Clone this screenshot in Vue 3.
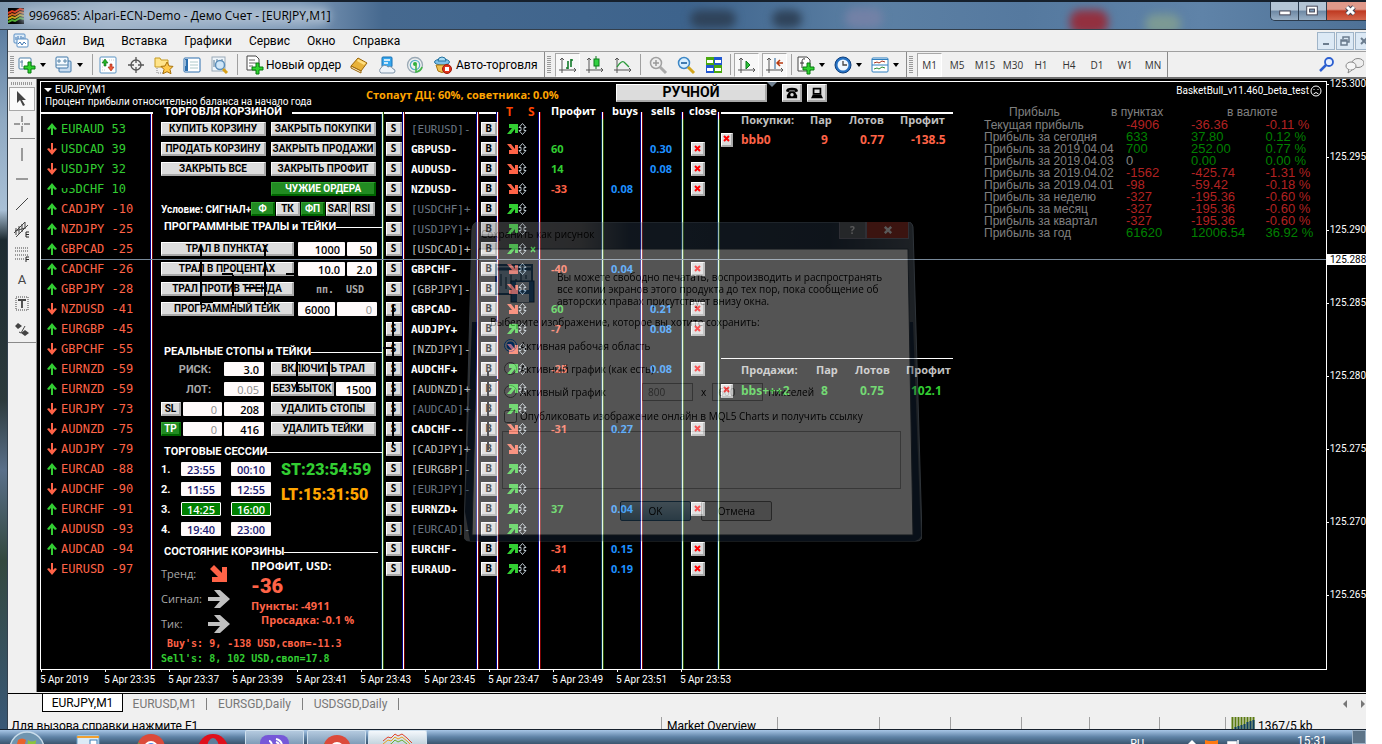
<script setup>
const icons = {
  app: '<rect width="16" height="16" fill="#000"/><g fill="none" stroke-width="2"><path d="M0 5l4-2 3 1 5-3 4 1" stroke="#e03a1e"/><path d="M0 8l4-2 3 1 5-3 4 1" stroke="#d8651c"/><path d="M0 11l4-2 3 1 5-3 4 1" stroke="#c8a818"/><path d="M0 14l4-2 3 1 5-3 4 1" stroke="#4fae2e"/></g>',
  charts: '<rect x="1" y="1" width="11" height="9" rx="1" fill="#dcebf8" stroke="#5a8fc4"/><path d="M3 7V4M5 6V3M8 7V3M10 6V4" stroke="#3c74b0"/><rect x="4" y="6" width="11" height="8" rx="1" fill="#fff" stroke="#5a8fc4"/><path d="M5 11l2-2 2 3 2-3 2 2" fill="none" stroke="#3c74b0"/>',
  plus: '<rect x="2" y="3" width="12" height="11" rx="1" fill="#fff" stroke="#4a7fa8"/><path d="M5 5v7M3 7h3" stroke="#5a86a8"/><path d="M11 7h3v4h4v3h-4v4h-3v-4H7v-3h4z" fill="#2fd42f" stroke="#087a10"/>',
  wins: '<rect x="5" y="6" width="12" height="11" rx="1" fill="#c8dcf0" stroke="#3f77a8"/><rect x="2" y="2" width="12" height="11" rx="1" fill="#f4faff" stroke="#3f77a8"/><path d="M2 10h12M5 4v4M3 6h4M11 4v4M9 6h4" stroke="#5a86a8"/>',
  market: '<rect x="2" y="2" width="16" height="16" rx="1" fill="#fff" stroke="#5a94c4"/><path d="M4 5h2M11 5h5M4 15h4M4 12h2" stroke="#c9ccd0" stroke-dasharray="1 1"/><path d="M7 4l3 4H8v3H6V8H4z" fill="#25b325" stroke="#0b6b10" stroke-width=".6"/><path d="M13 16l-3-4h2V9h2v3h2z" fill="#ee5a38" stroke="#9c2410" stroke-width=".6"/>',
  cross: '<circle cx="10" cy="10" r="5" fill="none" stroke="#555" stroke-width="1.3"/><path d="M10 2v6M10 12v6M2 10h6M12 10h6" stroke="#555" stroke-width="1.3"/>',
  star: '<path d="M1 3h5l1 2h7v7H1z" fill="#ffe48a" stroke="#c59a20"/><path d="M3 13v5h6" stroke="#888" fill="none" stroke-dasharray="1 1"/><path d="M13 7l2 4 4 .4-3 3 1 4.300-4-2-4 2 1-4.300-3-3 4-.4z" fill="#ffc94a" stroke="#a9720a"/>',
  nav: '<rect x="2" y="3" width="16" height="14" rx="1" fill="#fff" stroke="#2d6fae"/><path d="M3 4h3v12H3z" fill="#2d6fae"/><path d="M8 7h8M8 10h8M8 13h8" stroke="#9bb" stroke-width=".8"/><path d="M3 6h1M3 8h1M3 10h1" stroke="#fff"/>',
  tester: '<rect x="2" y="2" width="13" height="14" fill="#eef5fa" stroke="#9aaab8"/><path d="M4 5v7M7 4v5M12 4v4" stroke="#5a7a94"/><circle cx="10" cy="10" r="4.500" fill="#cfe6f8" stroke="#5c8fbb" stroke-width="1.500"/><path d="M13 14l4 4" stroke="#d8a018" stroke-width="3"/>',
  order: '<path d="M2 1h9l3 3v11H2z" fill="#fff" stroke="#444"/><path d="M4 5h6M4 8h7M4 11h4" stroke="#666"/><path d="M11 8h3v4h4v3h-4v4h-3v-4H7v-3h4z" fill="#2fd42f" stroke="#087a10"/>',
  book: '<path d="M2 11l7-8 9 5-6 8z" fill="#e8b23a" stroke="#9a6408"/><path d="M2 11l10 5v2L2 13z" fill="#fff3cf" stroke="#9a6408"/><path d="M9 4l8 4-2 2-7-4z" fill="#ffdf80"/>',
  cloud: '<rect x="5" y="2" width="10" height="10" rx="1" fill="#38a8ee" stroke="#1670b4"/><path d="M7 5h6M7 8h4" stroke="#fff" stroke-width="1.500"/><path d="M4 18a3 3 0 010-5 4 4 0 017-1 3.500 3.500 0 015 2 2 2 0 010 4z" fill="#eef4fa" stroke="#7d93a8"/>',
  signal: '<circle cx="10" cy="10" r="7.500" fill="none" stroke="#9aa9b5" stroke-width="1.300"/><circle cx="10" cy="10" r="4.700" fill="none" stroke="#5bb0c8" stroke-width="1.300"/><circle cx="10" cy="9" r="2" fill="#2fae3a"/><path d="M11 9v8q5-1 6-5" fill="none" stroke="#41b748" stroke-width="1.600"/>',
  auto: '<ellipse cx="9" cy="7" rx="7.500" ry="3" fill="#7dc0e8" stroke="#24719f"/><path d="M5 6q0-4 4-4t4 4z" fill="#a8dcf5" stroke="#24719f"/><path d="M3 10h12l-2 6q-4 3-8 0z" fill="#f0c050" stroke="#a87410"/><circle cx="14" cy="14" r="4.500" fill="#e0341c" stroke="#9c1c0c"/><rect x="12" y="12" width="4" height="4" fill="#fff"/>',
  bars: '<path d="M4 3v15M1 15h17M2 5l2-2 2 2M16 13l2 2-2 2" fill="none" stroke="#555"/><path d="M10 6v8M10 13H8M13 4v8M13 5h2" stroke="#127a2a" stroke-width="1.600"/>',
  candle: '<path d="M4 3v15M1 15h17M2 5l2-2 2 2M16 13l2 2-2 2" fill="none" stroke="#555"/><path d="M11 1v13" stroke="#0a7a1a"/><rect x="9" y="4" width="5" height="7" fill="#30d040" stroke="#0a7a1a"/>',
  line: '<path d="M4 3v15M1 15h17M2 5l2-2 2 2M16 13l2 2-2 2" fill="none" stroke="#555"/><path d="M4 12q5-8 8-4l4 4" fill="none" stroke="#2a9a3a" stroke-width="1.300"/>',
  zin: '<circle cx="8" cy="8" r="5.500" fill="#eee" stroke="#a0a0a0" stroke-width="1.500"/><path d="M5 8h6M8 5v6" stroke="#999" stroke-width="1.500"/><path d="M12 12l6 6" stroke="#aaa" stroke-width="3"/>',
  zout: '<circle cx="8" cy="8" r="5.500" fill="#d8efff" stroke="#3d87c6" stroke-width="1.500"/><path d="M5 8h6" stroke="#2f6ea8" stroke-width="1.800"/><path d="M12 12l6 6" stroke="#d2a51c" stroke-width="3"/>',
  tiles: '<rect x="2" y="2" width="8" height="8" fill="#49a80f"/><rect x="10" y="2" width="8" height="8" fill="#1f56d0"/><rect x="2" y="10" width="8" height="8" fill="#1f56d0"/><rect x="10" y="10" width="8" height="8" fill="#49a80f"/><path d="M3 5h6v3H3zM11 5h6v3h-6zM3 13h6v3H3zM11 13h6v3h-6z" fill="#fff"/>',
  scroll: '<path d="M4 3v15M1 15h17M2 5l2-2 2 2M16 13l2 2-2 2" fill="none" stroke="#555"/><path d="M9 6l4 4-4 4z" fill="#2fc23a" stroke="#0a7a1a"/>',
  shift: '<path d="M4 3v15M1 15h17M2 5l2-2 2 2M16 13l2 2-2 2" fill="none" stroke="#555"/><path d="M10 3v11" stroke="#1d5f98"/><path d="M18 8h-5M15 5l-3 3 3 3" stroke="#b83a10" stroke-width="1.500" fill="none"/>',
  ind: '<path d="M2 2h9l3 3v11H2z" fill="#fff" stroke="#444"/><path d="M9 4q-3-1-3 3v6M4 8h4" fill="none" stroke="#333"/><path d="M11 8h3v4h4v3h-4v4h-3v-4H7v-3h4z" fill="#2fd42f" stroke="#087a10"/>',
  clock: '<circle cx="10" cy="10" r="8" fill="#2672c4" stroke="#0f3f7c"/><circle cx="10" cy="10" r="5.500" fill="#eef7ff"/><path d="M10 6v4h4" fill="none" stroke="#444" stroke-width="1.300"/>',
  tpl: '<rect x="2" y="3" width="16" height="14" rx="1" fill="#fff" stroke="#2d7fc0"/><path d="M2 4.500h16M2 10h16" stroke="#2d7fc0"/><path d="M4 8l3-1 2 1 3-2 3 1" fill="none" stroke="#a8341c"/><path d="M4 14l3-1 2 1 3-2 3 1" fill="none" stroke="#2b8c34"/>',
  find: '<circle cx="12" cy="7" r="4" fill="#e8f0ff" stroke="#2c5fd0" stroke-width="1.800"/><path d="M9 10l-6 6" stroke="#2c5fd0" stroke-width="2.500"/>',
  chat: '<ellipse cx="14" cy="8" rx="6" ry="4.500" fill="#eee" stroke="#888"/><ellipse cx="7" cy="11" rx="5" ry="4" fill="#f6f6f6" stroke="#888"/><path d="M5 14l-1 4 4-3" fill="#f6f6f6" stroke="#888"/>',
  cursor: '<path d="M5 2v12l3-3 3 6 2-1-3-5h4z" fill="#444"/>',
  plusthin: '<path d="M10 2v6M10 12v6M2 10h6M12 10h6M10 10h1" stroke="#444"/>',
  vline: '<path d="M10 4v13" stroke="#444"/>',
  hline: '<path d="M4 10h12" stroke="#444"/>',
  diag: '<path d="M4 16L16 4" stroke="#444"/>',
  channel: '<path d="M2 14L13 3M4 18L16 6M4 9v7M7 7v8M10 5v8M13 3v7M3 12l10-3" stroke="#444" fill="none"/><path d="M17 13h-3v5h3M14 15.500h3" stroke="#222" fill="none"/>',
  fib: '<path d="M3 4h14M3 7h14M3 11h14M3 15h9" stroke="#444" stroke-dasharray="1 1"/><path d="M17 13h-3v5M14 15.500h3" stroke="#222" fill="none"/>',
  label: '<rect x="4" y="3" width="12" height="13" fill="none" stroke="#444" stroke-dasharray="1 1"/><path d="M6 6h8M10 6v8" stroke="#444" stroke-width="1.800"/>',
  marks: '<path d="M3 7l3-3 4 3-4 3zM9 14l4-3 4 3-4 3z" fill="#444"/><path d="M7 13l2 1 4-7" stroke="#444" fill="none"/>'
}
const menu = ['Файл', 'Вид', 'Вставка', 'Графики', 'Сервис', 'Окно', 'Справка']
const frames = ['M1', 'M5', 'M15', 'M30', 'H1', 'H4', 'D1', 'W1', 'MN']
const watch = [
  ['u', 'EURAUD', '53'], ['d', 'USDCAD', '39'], ['d', 'USDJPY', '32'], ['u', 'USDCHF', '10'],
  ['u', 'CADJPY', '-10'], ['u', 'NZDJPY', '-25'], ['u', 'GBPCAD', '-25'], ['u', 'CADCHF', '-26'],
  ['u', 'GBPJPY', '-28'], ['d', 'NZDUSD', '-41'], ['u', 'EURGBP', '-45'], ['d', 'GBPCHF', '-55'],
  ['u', 'EURNZD', '-59'], ['u', 'EURNZD', '-59'], ['d', 'EURJPY', '-73'], ['d', 'AUDNZD', '-75'],
  ['d', 'AUDJPY', '-79'], ['u', 'EURCAD', '-88'], ['d', 'AUDCHF', '-90'], ['u', 'EURCHF', '-91'],
  ['u', 'AUDUSD', '-93'], ['u', 'AUDCAD', '-94'], ['d', 'EURUSD', '-97']
]
const pairs = [
  ['[EURUSD]-', 'dim', 'u'], ['GBPUSD-', 'on', 'd', 60, '', '0.30'], ['AUDUSD-', 'on', 'd', 14, '', '0.08'],
  ['NZDUSD-', 'on', 'd', -33, '0.08', ''], ['[USDCHF]+', 'dim', 'u'], ['[USDJPY]+', 'dim', 'u'],
  ['[USDCAD]+', 'mid', 'u'], ['GBPCHF-', 'on', 'd', -40, '0.04', ''], ['[GBPJPY]-', 'mid', 'd'],
  ['GBPCAD-', 'on', 'd', 60, '', '0.21'], ['AUDJPY+', 'on', 'u', -7, '', '0.08'], ['[NZDJPY]-', 'mid', 'd'],
  ['AUDCHF+', 'on', 'u', -25, '', '0.08'], ['[AUDNZD]+', 'mid', 'u'], ['[AUDCAD]+', 'dim', 'u'],
  ['CADCHF--', 'on', 'd', -31, '0.27', ''], ['[CADJPY]+', 'mid', 'd'], ['[EURGBP]-', 'mid', 'u'],
  ['[EURJPY]-', 'dim', 'u'], ['EURNZD+', 'on', 'u', 37, '0.04', ''], ['[EURCAD]-', 'dim', 'u'],
  ['EURCHF-', 'on', 'u', -31, '0.15', ''], ['EURAUD-', 'on', 'u', -41, '0.19', '']
]
const sessions = [['23:55', '00:10'], ['11:55', '12:55'], ['14:25', '16:00'], ['19:40', '23:00']]
const report = [
  ['Текущая прибыль', '-4906', '-36.36', '-0.11 %', 'r', 'r'],
  ['Прибыль за сегодня', '633', '37.80', '0.12 %', 'g', 'g'],
  ['Прибыль за 2019.04.04', '700', '252.00', '0.77 %', 'g', 'g'],
  ['Прибыль за 2019.04.03', '0', '0.00', '0.00 %', 'n', 'g'],
  ['Прибыль за 2019.04.02', '-1562', '-425.74', '-1.31 %', 'r', 'r'],
  ['Прибыль за 2019.04.01', '-98', '-59.42', '-0.18 %', 'r', 'r'],
  ['Прибыль за неделю', '-327', '-195.36', '-0.60 %', 'r', 'r'],
  ['Прибыль за месяц', '-327', '-195.36', '-0.60 %', 'r', 'r'],
  ['Прибыль за квартал', '-327', '-195.36', '-0.60 %', 'r', 'r'],
  ['Прибыль за год', '61620', '12006.54', '36.92 %', 'g', 'g']
]
const baskets = [
  { title: 'Покупки:', name: 'bbb0', n: 9, lots: '0.77', profit: '-138.5', cls: 'buy' },
  { title: 'Продажи:', name: 'bbs+++2', n: 8, lots: '0.75', profit: '102.1', cls: 'sell' }
]
const prices = ['125.300', '125.295', '125.290', '125.285', '125.280', '125.275', '125.270', '125.265']
const dates = ['5 Apr 2019', '5 Apr 23:35', '5 Apr 23:37', '5 Apr 23:39', '5 Apr 23:41', '5 Apr 23:43', '5 Apr 23:45', '5 Apr 23:47', '5 Apr 23:49', '5 Apr 23:51', '5 Apr 23:53']
const tools = ['vline', 'hline', 'diag', 'channel', 'fib', 'A', 'label', 'marks']
</script>

<template>
  <div class="screen">
    <header class="title">
      <div class="glow g1"></div><div class="glow g2"></div><div class="glow g3"></div><div class="glow g4"></div><div class="glow g5"></div><div class="glow g6"></div>
      <svg class="i16" viewBox="0 0 16 16" v-html="icons.app"></svg>
      <h1>9969685: Alpari-ECN-Demo - Демо Счет - [EURJPY,M1]</h1>
      <div class="winbtns">
        <button aria-label="Свернуть"><svg viewBox="0 0 28 18"><rect x="9" y="9" width="11" height="4" fill="#fff" stroke="#445" /></svg></button>
        <button aria-label="Развернуть"><svg viewBox="0 0 28 18"><rect x="8" y="4" width="11" height="9" fill="#fff" stroke="#445" /><rect x="11" y="7" width="5" height="3" fill="#7d9ab8" stroke="#445" /></svg></button>
        <button class="x" aria-label="Закрыть"><svg viewBox="0 0 39 18"><path d="M20 5l7 7M27 5l-7 7" stroke="#445" stroke-width="5" /><path d="M20 5l7 7M27 5l-7 7" stroke="#fff" stroke-width="3" /></svg></button>
      </div>
    </header>

    <div class="frame">
      <nav class="menu">
        <svg class="i16" viewBox="0 0 16 16" v-html="icons.charts"></svg>
        <a v-for="m in menu" :key="m" href="#">{{ m }}</a>
        <div class="mdi">
          <button aria-label="Свернуть окно"><svg viewBox="0 0 16 16"><path d="M5 11h6" stroke="#6b7c8e" stroke-width="2" /></svg></button>
          <button aria-label="Восстановить окно"><svg viewBox="0 0 16 16"><path d="M6 6V4h6v5h-2M4 7h6v5H4zM4 8h6" fill="none" stroke="#6b7c8e" stroke-width="1.500" /></svg></button>
          <button aria-label="Закрыть окно"><svg viewBox="0 0 16 16"><path d="M5 5l6 6M11 5l-6 6" stroke="#6b7c8e" stroke-width="2" /></svg></button>
        </div>
      </nav>

      <div class="toolbar">
        <i class="grip"></i>
        <button class="split" aria-label="Новый график"><svg viewBox="0 0 20 20" v-html="icons.plus"></svg><i class="caret"></i></button>
        <button class="split" aria-label="Профили"><svg viewBox="0 0 20 20" v-html="icons.wins"></svg><i class="caret"></i></button>
        <i class="sep tight"></i>
        <button v-for="n in ['market', 'cross', 'star', 'nav', 'tester']" :key="n" class="tb" :aria-label="n"><svg viewBox="0 0 20 20" v-html="icons[n]"></svg></button>
        <i class="sep"></i>
        <button class="wide"><svg viewBox="0 0 20 20" v-html="icons.order"></svg>Новый ордер</button>
        <button v-for="n in ['book', 'cloud', 'signal']" :key="n" class="tb" :aria-label="n"><svg viewBox="0 0 20 20" v-html="icons[n]"></svg></button>
        <button class="wide auto"><svg viewBox="0 0 20 20" v-html="icons.auto"></svg>Авто-торговля</button>
        <i class="end"></i><i class="grip"></i>
        <button class="tb on" aria-label="Бары"><svg viewBox="0 0 20 20" v-html="icons.bars"></svg></button>
        <button v-for="n in ['candle', 'line']" :key="n" class="tb" :aria-label="n"><svg viewBox="0 0 20 20" v-html="icons[n]"></svg></button>
        <i class="sep"></i>
        <button v-for="n in ['zin', 'zout', 'tiles']" :key="n" class="tb" :aria-label="n"><svg viewBox="0 0 20 20" v-html="icons[n]"></svg></button>
        <i class="sep tight"></i>
        <button v-for="n in ['scroll', 'shift']" :key="n" class="tb on" :aria-label="n"><svg viewBox="0 0 20 20" v-html="icons[n]"></svg></button>
        <i class="sep"></i>
        <button v-for="n in ['ind', 'clock', 'tpl']" :key="n" class="split" :aria-label="n"><svg viewBox="0 0 20 20" v-html="icons[n]"></svg><i class="caret"></i></button>
        <i class="end"></i><i class="grip"></i>
        <button v-for="(f, i) in frames" :key="f" class="tb tf" :class="{ on: i === 0 }">{{ f }}</button>
        <i class="end"></i>
        <span class="grow"></span>
        <button class="tb" aria-label="Поиск"><svg viewBox="0 0 20 20" v-html="icons.find"></svg></button>
        <button class="tb chat" aria-label="Чат"><svg viewBox="0 0 20 20" v-html="icons.chat"></svg></button>
      </div>

      <div class="work">
        <aside class="tools">
          <i class="hgrip"></i>
          <button class="on" aria-label="Курсор"><svg viewBox="0 0 20 20" v-html="icons.cursor"></svg></button>
          <button aria-label="Перекрестие"><svg viewBox="0 0 20 20" v-html="icons.plusthin"></svg></button>
          <i class="hsep"></i>
          <template v-for="t in tools" :key="t">
            <button v-if="t === 'A'" class="letter">A</button>
            <button v-else :aria-label="t"><svg viewBox="0 0 20 20" v-html="icons[t]"></svg></button>
          </template>
          <i class="toolend"></i>
        </aside>

        <main class="chart">
          <div class="plotrow">
            <section class="plot">
              <div class="head">
                <div class="sym">
                  <p><i class="tri"></i>EURJPY,M1</p>
                  <p class="sub">Процент прибыли относительно баланса на начало года</p>
                </div>
                <p class="stopout">Стопаут ДЦ: 60%, советника: 0.0%</p>
                <button class="raised manual">РУЧНОЙ</button>
                <i class="drop"></i>
                <button class="raised sq" aria-label="Телефон"><svg viewBox="0 0 16 14"><path d="M1 5q0-4 7-4t7 4l-3 1-1-2H5L4 6z" /><path d="M5 5h6l3 5v3H2v-3z" /><circle cx="8" cy="9" r="2" fill="#dcdcdc" /></svg></button>
                <button class="raised sq" aria-label="Компьютер"><svg viewBox="0 0 16 14"><path d="M4 2h8v6H4z" fill="#ddd" stroke="#000" stroke-width="2" /><path d="M3 9h10l2 4H1z" /></svg></button>
                <p class="expert">BasketBull_v11.460_beta_test<svg viewBox="0 0 12 12"><circle cx="6" cy="6" r="5" fill="none" stroke="#fff" /><path d="M4 4v1M8 4v1M3.500 9q2.500-3 5 0" stroke="#fff" fill="none" /></svg></p>
              </div>

              <div class="cols">
                <ul class="watch">
                  <li v-for="(w, i) in watch" :key="i">
                    <svg viewBox="0 0 10 12" :class="w[0]"><path d="M5 0l5 6-2 1-2-2v7H4V5L2 7 0 6z" /></svg>
                    <span :class="w[2][0] === '-' ? 'neg' : 'pos'">{{ w[1] }} {{ w[2] }}</span>
                  </li>
                </ul>

                <section class="panel">
                  <h2 class="first">ТОРГОВЛЯ КОРЗИНОЙ</h2>
                  <div class="row"><button class="raised b105">КУПИТЬ КОРЗИНУ</button><button class="raised b105 right">ЗАКРЫТЬ ПОКУПКИ</button></div>
                  <div class="row"><button class="raised b105">ПРОДАТЬ КОРЗИНУ</button><button class="raised b105 right">ЗАКРЫТЬ ПРОДАЖИ</button></div>
                  <div class="row"><button class="raised b105">ЗАКРЫТЬ ВСЕ</button><button class="raised b105 right">ЗАКРЫТЬ ПРОФИТ</button></div>
                  <div class="row"><button class="raised b105 right green">ЧУЖИЕ ОРДЕРА</button></div>
                  <div class="row cond"><span>Условие: СИГНАЛ+</span><button class="raised green">Ф</button><button class="raised">ТК</button><button class="raised green">ФП</button><button class="raised">SAR</button><button class="raised">RSI</button></div>
                  <h2 class="second">ПРОГРАММНЫЕ ТРАЛЫ и ТЕЙКИ</h2>
                  <div class="row"><button class="raised b133">ТРАЛ В ПУНКТАХ</button><input class="w47" value="1000" aria-label="Пункты" /><input class="w30" value="50" aria-label="Шаг" /></div>
                  <div class="row"><button class="raised b133">ТРАЛ В ПРОЦЕНТАХ</button><input class="w47" value="10.0" aria-label="Процент" /><input class="w30" value="2.0" aria-label="Шаг процента" /></div>
                  <div class="row"><button class="raised b133">ТРАЛ ПРОТИВ ТРЕНДА</button><span class="units"><b>пп.</b><b>USD</b></span></div>
                  <div class="row"><button class="raised b133">ПРОГРАММНЫЙ ТЕЙК</button><input class="w37" value="6000" aria-label="Тейк" /><input class="w40 off" value="0" aria-label="Тейк USD" /></div>
                  <div class="row"></div>
                  <h2>РЕАЛЬНЫЕ СТОПЫ и ТЕЙКИ</h2>
                  <div class="row"><label for="risk">РИСК:</label><input id="risk" class="w40" value="3.0" /><button class="raised b105 right">ВКЛЮЧИТЬ ТРАЛ</button></div>
                  <div class="row"><label for="lot">ЛОТ:</label><input id="lot" class="w40 off" value="0.05" /><span class="pair2"><button class="raised b63">БЕЗУБЫТОК</button><input class="w40" value="1500" aria-label="Безубыток" /></span></div>
                  <div class="row"><button class="raised b20">SL</button><input class="w39 off" value="0" aria-label="SL" /><input class="w40" value="208" aria-label="SL пункты" /><button class="raised b105 right">УДАЛИТЬ СТОПЫ</button></div>
                  <div class="row"><button class="raised b20 green">TP</button><input class="w39 off" value="0" aria-label="TP" /><input class="w40" value="416" aria-label="TP пункты" /><button class="raised b105 right">УДАЛИТЬ ТЕЙКИ</button></div>
                  <h2>ТОРГОВЫЕ СЕССИИ</h2>
                  <div class="sess">
                    <div>
                      <div v-for="(s, i) in sessions" :key="i" class="row s"><span>{{ i + 1 }}.</span><input v-for="v in s" :key="v" :value="v" :class="{ act: i === 2 }" :aria-label="'Сессия ' + (i + 1)" /></div>
                    </div>
                    <div class="clocks"><p>ST:23:54:59</p><p class="lt">LT:15:31:50</p></div>
                  </div>
                  <h2 class="last">СОСТОЯНИЕ КОРЗИНЫ</h2>
                  <div class="state">
                    <div class="dirs">
                      <p>Тренд:<svg viewBox="0 0 22 18"><path d="M2 4l4-4 8 8V2h5v15H4v-5h6z" fill="#ff6347" /></svg></p>
                      <p>Сигнал:<svg viewBox="0 0 22 18"><path d="M0 7h12L6 0h6l10 9-10 9H6l6-7H0z" fill="#c0c0c0" /></svg></p>
                      <p>Тик:<svg viewBox="0 0 22 18"><path d="M0 7h12L6 0h6l10 9-10 9H6l6-7H0z" fill="#c0c0c0" /></svg></p>
                    </div>
                    <div class="sum"><p>ПРОФИТ, USD:</p><p class="big">-36</p><p class="neg">Пункты: -4911</p><p class="neg in">Просадка: -0.1 %</p></div>
                  </div>
                  <p class="mono neg buys">Buy's: 9, -138 USD,своп=-11.3</p>
                  <p class="mono pos">Sell's: 8, 102 USD,своп=17.8</p>
                </section>

                <table class="grid">
                  <colgroup><col class="c1" /><col class="c2" /><col class="c3" /><col class="c4" /><col class="c5" /><col class="c6" /><col class="c7" /><col class="c8" /></colgroup>
                  <thead><tr><th class="bar"></th><th class="bar"></th><th class="bar"></th><th class="ts"><span>T</span><span>S</span></th><th>Профит</th><th>buys</th><th>sells</th><th>close</th></tr></thead>
                  <tbody>
                    <tr v-for="p in pairs" :key="p[0]">
                      <td><button class="raised b16">S</button></td>
                      <td class="name" :class="p[1]">{{ p[0] }}</td>
                      <td><button class="raised b16">B</button></td>
                      <td class="dir"><svg viewBox="0 0 29 12"><path v-if="p[2] === 'u'" d="M2 1h9v9H8V6l-4 5H0l5-6H2z" fill="#32cd32" /><path v-else d="M2 11h9V2H8v4L4 1H0l5 6H2z" fill="#ff6347" /><path d="M15.500 .5l3.500 4h-2v3h2l-3.500 4-3.500-4h2v-3h-2z" fill="none" stroke="#b8c4cc" /><path v-if="p[0] === '[USDCAD]+'" d="M24 4l4 5M28 4l-4 5" stroke="#32cd32" stroke-width="1.500" /></svg></td>
                      <td :class="p[3] < 0 ? 'neg' : 'pos'">{{ p[3] }}</td>
                      <td class="lot">{{ p[4] }}</td>
                      <td class="lot">{{ p[5] }}</td>
                      <td><button v-if="p[3]" class="raised kill" aria-label="Закрыть позицию"><svg viewBox="0 0 8 8"><path d="M1 1l5 5M6 1L1 6" /></svg></button></td>
                    </tr>
                    <tr class="rest"><td v-for="n in 8" :key="n"></td></tr>
                  </tbody>
                </table>

                <div class="baskets">
                  <table v-for="b in baskets" :key="b.name" :class="b.cls">
                    <thead><tr><th></th><th class="n">{{ b.title }}</th><th>Пар</th><th>Лотов</th><th>Профит</th></tr></thead>
                    <tbody><tr><td><button class="raised kill k12" aria-label="Закрыть корзину"><svg viewBox="0 0 8 8"><path d="M1 1l5 5M6 1L1 6" /></svg></button></td><td class="n">{{ b.name }}</td><td>{{ b.n }}</td><td>{{ b.lots }}</td><td>{{ b.profit }}</td></tr></tbody>
                  </table>
                </div>

                <table class="report">
                  <thead><tr><th>Прибыль</th><th class="pts"><span>в пунктах</span></th><th colspan="2">в валюте</th></tr></thead>
                  <tbody><tr v-for="r in report" :key="r[0]"><td>{{ r[0] }}</td><td :class="r[4]">{{ r[1] }}</td><td :class="r[5]">{{ r[2] }}</td><td :class="r[5]">{{ r[3] }}</td></tr></tbody>
                </table>
              </div>

              <svg class="strokes" width="460" height="400" viewBox="0 0 460 400"><path d="M160 163v60M224 163v60M192 193v30M256 160v34M181 192h11M245 192h11M205 206h8M212 206h14M160 220h12M256 280v30M288 280v14M352 223v140M342 266h10M447 290v78M447 298h12" stroke="#000" stroke-width="2" fill="none" /><path d="M19 100h15v6H19z" fill="#000" /></svg>
              <i class="cursorline"></i>

              <div class="dialog" role="dialog" aria-label="Сохранить как рисунок">
                <svg class="shape" viewBox="0 0 458 320" preserveAspectRatio="none">
                  <defs><linearGradient id="glass" x1="0" x2="1" y1="0" y2="0"><stop offset="0" stop-color="#8a8d92" /><stop offset=".25" stop-color="#77797d" /><stop offset=".36" stop-color="#2f4156" /><stop offset=".8" stop-color="#2a3a4c" /><stop offset="1" stop-color="#59636e" /></linearGradient></defs>
                  <path d="M14 0h430q4 0 5 5l9 309q0 5-6 5H6q-6 0-6-5L8 7q1-7 6-7z" fill="url(#glass)" stroke="#8494a4" />
                  <path d="M1 290L8 100l6 0-4 210h438l-4-210 5 0 8 214q-2 4-6 5H6z" fill="#1c3048" />
                  <path d="M15 27h429l5 286H8z" fill="#f0f0f0" stroke="#33404e" />
                </svg>
                <div class="dhead"><span>Сохранить как рисунок</span><button aria-label="Справка диалога">?</button><button class="dx" aria-label="Закрыть диалог"><svg viewBox="0 0 12 10"><path d="M2 1l8 8M10 1L2 9" stroke="#fff" stroke-width="3" /></svg></button></div>
                <div class="dbody">
                  <div class="info"><svg viewBox="0 0 40 40"><rect x="1" y="2" width="36" height="29" fill="#a9c8e2" stroke="#2b5d88" stroke-width="2" /><path d="M1 6h36" stroke="#2b5d88" stroke-width="3" /><path d="M6 11v12M11 14v12M16 12v8M21 16v9M26 10v8M31 12v4" stroke="#123a5c" /><rect x="16" y="18" width="23" height="21" fill="#2f6da6" stroke="#123a5c" /><rect x="21" y="19" width="13" height="8" fill="#dde9f4" /><rect x="22" y="31" width="12" height="8" fill="#dde9f4" /></svg>
                    <p>Вы можете свободно печатать, воспроизводить и распространять<br />все копии экранов этого продукта до тех пор, пока сообщение об<br />авторских правах присутствует внизу окна.</p></div>
                  <p class="choose">Выберите изображение, которое вы хотите сохранить:</p>
                  <label class="opt"><input type="radio" name="img" checked />Активная рабочая область</label>
                  <label class="opt"><input type="radio" name="img" />Активный график (как есть)</label>
                  <div class="opt"><label><input type="radio" name="img" />Активный график</label><input class="size first" value="800" aria-label="Ширина" /><span>x</span><input class="size" value="600" aria-label="Высота" /><span>пикселей</span></div>
                  <label class="opt pub"><input type="checkbox" />Опубликовать изображение онлайн в MQL5 Charts и получить ссылку</label>
                  <textarea aria-label="Описание"></textarea>
                  <div class="acts"><button class="ok">OK</button><button>Отмена</button></div>
                </div>
              </div>
            </section>

            <aside class="scale"><span v-for="p in prices" :key="p">{{ p }}</span><b>125.288</b></aside>
          </div>
          <div class="dates"><span v-for="d in dates" :key="d">{{ d }}</span></div>
        </main>
      </div>

      <div class="tabs">
        <a class="cur" href="#">EURJPY,M1</a><a href="#">EURUSD,M1</a><a href="#">EURSGD,Daily</a><a href="#">USDSGD,Daily</a>
        <span class="grow"></span><i class="la"></i><i class="ra"></i>
      </div>
      <footer class="status">
        <span class="help">Для вызова справки нажмите F1</span><span class="s116">Market Overview</span><span class="s102"></span><span class="s71"></span><span class="s71"></span><span class="s68"></span><span class="s70"></span><span class="s66"></span>
        <span class="net"><svg viewBox="0 0 24 12"><path d="M1.500 0v12M4.500 0v12M7.500 0v12M10.500 0v12M13.500 0v12M16.500 0v12M19.500 0v12M22.500 0v12" stroke="#5a7a10" stroke-width="2" /><path d="M4.500 10v2M7.500 9v3M10.500 8v4M13.500 7v5M16.500 5v7M19.500 4v8M22.500 3v9" stroke="#0f3f60" stroke-width="2" /></svg>1367/5 kb</span>
      </footer>
    </div>

    <div class="taskbar">
      <svg class="orb" viewBox="0 0 36 15"><circle cx="18" cy="19" r="17" fill="#6f95b0" stroke="#c9dcea" stroke-width="1.500" /><path d="M9 10q4-3 8 0l-2 8H7z" fill="#e8622a" /><path d="M19 10q4 3 8 0l-1 8h-8z" fill="#8cc43c" /></svg>
      <svg class="t1" viewBox="0 0 36 15"><rect x="7" y="5" width="22" height="14" fill="#dcebf6" stroke="#6da0c8" /><path d="M7 7h22" stroke="#f0a030" stroke-width="2" /><rect x="20" y="10" width="7" height="5" fill="#fff" stroke="#3b7fb8" /></svg>
      <svg class="t2" viewBox="0 0 36 15"><circle cx="18" cy="18" r="14" fill="#dc4a3a" /><path d="M5 12l8 7-6 5z" fill="#4caf50" /><circle cx="18" cy="18" r="6" fill="#4a8cf0" stroke="#fff" stroke-width="2" /></svg>
      <svg class="t3" viewBox="0 0 36 15"><ellipse cx="18" cy="19" rx="15" ry="15" fill="#e0101c" /><ellipse cx="18" cy="19" rx="6" ry="11" fill="#5d7f9c" /></svg>
      <span class="task t4"><svg viewBox="0 0 36 15"><rect x="3" y="4" width="29" height="20" rx="8" fill="#7658d8" /><path d="M12 10q2 0 3 4M19 8q5 1 6 6M19 11q3 1 3 3" fill="none" stroke="#fff" stroke-width="2" /></svg></span>
      <span class="task t5"><svg viewBox="0 0 36 15"><circle cx="18" cy="18" r="14" fill="#dc4a3a" /><path d="M5 12l8 7-6 5z" fill="#4caf50" /><circle cx="18" cy="18" r="6" fill="#4a8cf0" stroke="#fff" stroke-width="2" /></svg></span>
      <span class="task lit t6"><svg viewBox="0 0 36 15"><g fill="none"><path d="M3 10l5-4 3 1 4-4 3 2 4-2 5 4 5 5" stroke="#e0442a" /><path d="M3 13l5-4 3 1 4-4 3 2 4-2 5 4 5 5" stroke="#e8a020" /><path d="M6 15l5-2 4-4 3 2 4-2 5 4" stroke="#6aae2e" /></g></svg></span>
      <span class="grow"></span>
      <span class="lang">RU</span>
      <svg class="tray" viewBox="0 0 66 15"><path d="M0 14l4-4 4 4z" fill="#fff" /><path d="M17 10l4 1h6l3-1v5H17z" fill="#ff7a10" /><path d="M40 12h8v3h-8zM50 10v5" stroke="#fff" stroke-width="1.500" fill="#fff" /></svg>
      <span class="time">15:31</span>
      <i class="peek"></i>
    </div>
  </div>
</template>

<style>
body { margin: 0; background: #fff; }
</style>

<style scoped>
* { box-sizing: border-box; margin: 0; padding: 0; }
.screen { display: flex; flex-direction: column; height: 100vh; min-height: 744px; margin-right: 16px; overflow: hidden; font: 12px Roboto, "Open Sans", sans-serif; color: #000; background: linear-gradient(#4a6f96 0, #8fa9c2 120px, #a9c0d6 210px, #1c2a30 240px, #2c3a3c 400px, #5a708a 470px, #33483e 560px, #3a5a7c 100%); }
button { font: inherit; border: 0; background: none; color: inherit; flex: none; }
a { color: inherit; text-decoration: none; }
svg { display: block; flex: none; }
i { display: block; flex: none; }
.grow { flex: 1; }
.i16 { width: 16px; height: 16px; }
.title { position: relative; display: flex; height: 30px; padding: 0 0 0 8px; align-items: center; gap: 5px; border-top: 2px solid #16202c; background: linear-gradient(90deg, #8098b0 0, #9fb3c8 8%, #7f9ab8 22%, #46698f 28%, #3d638c 50%, #5c80a4 64%, #55799f 75%, #5f83a8 88%, #4e7196 100%); overflow: hidden; border-bottom: 1px solid #333f4c; }
.title h1 { font: 400 12px "Open Sans", sans-serif; position: relative; white-space: nowrap; }
.glow { position: absolute; filter: blur(4px); border-radius: 10px; }
.g1 { left: 20px; top: 6px; width: 310px; height: 16px; background: #a9bbce; }
.g2 { left: 690px; top: 8px; width: 46px; height: 18px; background: #2f435a; }
.g3 { left: 772px; top: 8px; width: 30px; height: 18px; background: #2f435a; }
.g4 { left: 845px; top: 6px; width: 38px; height: 20px; background: #7381a6; }
.g5 { left: 1070px; top: 8px; width: 38px; height: 24px; background: #93303f; }
.g6 { left: 1145px; top: 12px; width: 36px; height: 20px; background: #7c9a94; }
.winbtns { position: relative; display: flex; margin-left: auto; align-self: flex-start; border: 1px solid #2c3c4e; border-top: 0; border-right: 0; border-radius: 0 0 0 5px; overflow: hidden; }
.winbtns button { width: 28px; height: 18px; border-right: 1px solid #2c3c4e; background: linear-gradient(#b4c4d4 45%, #6d88a4 50%, #9ab0c6); }
.winbtns .x { width: 39px; background: linear-gradient(#e0998a 40%, #bf3a22 50%, #d4664c); border: 0; }
.winbtns svg { width: 100%; height: 18px; }
.frame { flex: 1; display: flex; flex-direction: column; margin-left: 7px; border-left: 1px solid #33404e; background: #f0f0f0; min-height: 0; }
.menu { display: flex; height: 21px; padding-left: 5px; align-items: center; gap: 17px; }
.menu .i16 { margin-right: -10px; }
.mdi { display: flex; gap: 1px; margin-left: auto; width: 49px; overflow: hidden; }
.mdi button { width: 18px; height: 18px; border: 1px solid #9fb4c8; background: #dce9f5; }
.toolbar { display: flex; height: 28px; align-items: stretch; border-top: 1px solid #a0a0a0; border-bottom: 2px solid #707070; overflow: hidden; }
.toolbar button { display: flex; align-items: center; justify-content: center; white-space: nowrap; }
.toolbar svg { width: 20px; height: 20px; }
.grip { width: 4px; margin: 4px 2px; background: repeating-linear-gradient(#999 0 1px, transparent 1px 2px); }
.tb { width: 28px; }
.tb.on { background: #f8f8f8; border: 1px solid #a8a8a8; border-right-color: #fff; border-bottom-color: #fff; width: 25px; margin: 1px 1px 0 2px; }
.toolbar .chat { width: 25px; }
.tf { font: 10px "Open Sans", sans-serif; color: #333; }
.toolbar .split { width: 37px; gap: 3px; padding-left: 1px; justify-content: flex-start; }
.caret { border: 3px solid transparent; border-top: 4px solid #000; border-bottom: 0; width: 6px; }
.sep { width: 1px; margin: 2px 3px; background: #a0a0a0; }
.sep.tight { margin: 2px 1px 2px 2px; }
.end { width: 1px; background: #8a8a8a; }
.toolbar .wide { width: 104px; gap: 1px; padding-left: 4px; justify-content: flex-start; }
.toolbar .auto { width: 115px; gap: 3px; padding-left: 4px; }
.work { flex: 1; display: flex; min-height: 0; }
.tools { width: 29px; display: flex; flex-direction: column; align-items: center; padding-top: 3px; border-right: 1px solid #8a8a8a; gap: 1px; }
.tools button { width: 26px; height: 24px; display: flex; align-items: center; justify-content: center; }
.tools .on { background: #fafafa; border: 1px solid #a8a8a8; }
.tools svg { width: 20px; height: 20px; }
.tools .letter { font-size: 13px; color: #444; }
.hgrip { width: 22px; height: 3px; margin-bottom: 1px; background: repeating-linear-gradient(90deg, #999 0 1px, transparent 1px 2px); }
.hsep { width: 25px; height: 1px; margin: 1px 0 2px; background: #8a8a8a; }
.toolend { width: 100%; height: 1px; background: #8a8a8a; }
.chart { flex: 1; min-width: 0; display: flex; flex-direction: column; background: #000; color: #fff; padding: 2px 0 0 3px; }
.plotrow { flex: 1; display: flex; min-height: 0; }
.plot { position: relative; flex: 1; min-width: 0; border: 1px solid #fff; display: flex; flex-direction: column; overflow: hidden; }
.head { display: flex; height: 23px; align-items: flex-start; padding-top: 2px; }
.sym { width: 325px; padding-left: 4px; font-size: 10px; line-height: 12px; white-space: nowrap; }
.sym p { display: flex; align-items: center; }
.tri { border: 4px solid transparent; border-top: 4px solid #fff; border-bottom: 0; margin: 0 3px 0 -1px; }
.stopout { width: 250px; color: #ffa500; font: 700 11px "Open Sans", sans-serif; line-height: 22px; white-space: nowrap; }
.raised { height: 14px; background: #dcdcdc; border: 2px solid; border-color: #fff #a9a9a9 #a9a9a9 #fff; border-width: 1px 2px 2px 1px; color: #000; font-weight: 700; font-size: 10px; line-height: 11px; text-align: center; white-space: nowrap; display: flex; justify-content: center; align-items: center; }
.raised.green { background: #228b22; border-color: #32a232 #006400 #006400 #32a232; color: #fff; }
.manual { width: 151px; height: 18px; font-size: 14px; }
.drop { border: 5px solid transparent; border-top: 5px solid #708090; border-bottom: 0; margin: -2px 5px 0 0; }
.sq { width: 20px; height: 18px; margin-right: 5px; }
.sq svg { width: 14px; height: 12px; }
.expert { margin-left: auto; display: flex; align-items: center; font-size: 10px; line-height: 14px; padding-right: 4px; white-space: nowrap; }
.expert svg { width: 12px; height: 12px; margin-left: 1px; }
.cols { flex: 1; display: flex; min-height: 0; align-items: stretch; }
.watch { list-style: none; width: 112px; flex: none; margin-top: 7px; padding: 5px 0 0 6px; border-top: 2px solid #fff; background: linear-gradient(90deg, #00008b 1px, #fff 1px 2px, #780000 2px) right / 3px 100% no-repeat; }
.watch li { height: 20px; display: flex; align-items: center; gap: 4px; font: 12px "DejaVu Sans Mono", monospace; white-space: nowrap; }
.watch svg { width: 10px; height: 12px; }
.u { fill: #32cd32; }
.d { fill: #ff6347; transform: rotate(180deg); }
.neg { color: #ff6347; }
.pos { color: #32cd32; }
.panel { width: 231px; flex: none; padding-left: 8px; font-size: 11px; font-weight: 700; background: linear-gradient(90deg, #002850 1px, #e0ffe0 1px 2px, #285000 2px) right bottom / 3px calc(100% - 7px) no-repeat; }
.panel h2 { display: flex; align-items: center; height: 14px; margin-top: 6px; padding: 0 2px 0 3px; font-size: 11px; line-height: 14px; white-space: nowrap; }
.panel h2::after { content: ""; flex: 1; height: 1px; background: #fff; }
.panel h2.first { margin: 0; }
.panel h2.first::after { height: 2px; margin: 2px 0 0 10px; }
.panel h2.second { height: 16px; margin: 0 0 4px; }
.row { height: 20px; display: flex; align-items: center; padding: 0 7px 0 0; gap: 2px; }
.row > .right, .row > .pair2 { margin-left: auto; margin-right: 1px; }
.pair2 { display: flex; gap: 2px; }
.b105 { width: 105px; }
.b133 { width: 133px; margin-right: 2px; }
.b63 { width: 63px; }
.b20 { width: 20px; }
.b16 { width: 16px; }
.row input { height: 14px; border: 0; border-radius: 1px; background: #fffafa; color: #000; font: 600 11px "Open Sans", sans-serif; text-align: right; padding: 0 5px; min-width: 0; }
.row input.off { color: #8a8a8a; font-weight: 400; }
.w47 { width: 47px; }
.w30 { width: 30px; }
.w37 { width: 37px; }
.w40 { width: 40px; }
.w39 { width: 39px; }
.cond { gap: 1px; }
.cond span { width: 89px; font-size: 10px; white-space: nowrap; }
.cond button { width: 24px; }
.units { display: flex; gap: 12px; padding-left: 18px; color: #a9a9a9; font: 10px "DejaVu Sans Mono", monospace; }
.row label { width: 61px; padding-right: 11px; text-align: right; color: #a9a9a9; font-size: 11px; }
.sess { display: flex; }
.row.s { gap: 10px; }
.row.s span { width: 10px; }
.row.s input { width: 40px; padding: 0; text-align: center; color: #191970; font-weight: 600; }
.row.s input.act { background: #008000; color: #fff; border: 1px solid #fff; }
.clocks { margin: -2px 0 0 3px; font: 900 16px Roboto, sans-serif; line-height: 25px; color: #32cd32; }
.lt { color: #ffa500; }
.panel h2.last { padding-right: 6px; }
.state { display: flex; height: 77px; }
.dirs { width: 90px; font: 400 11px "Open Sans", sans-serif; color: #a9a9a9; padding-top: 2px; }
.dirs p { height: 25px; display: flex; align-items: center; justify-content: space-between; padding-right: 21px; }
.dirs svg { width: 22px; height: 18px; }
.sum { font-family: "Open Sans", sans-serif; line-height: 14px; white-space: nowrap; }
.sum .big { font: 900 20px Roboto, sans-serif; line-height: 26px; color: #ff6347; }
.in { padding-left: 10px; }
.mono { font: 700 10px "DejaVu Sans Mono", monospace; line-height: 15px; white-space: nowrap; }
.buys { padding-left: 6px; }
.grid { width: 336px; flex: none; table-layout: fixed; border-collapse: collapse; font: 700 11px "Open Sans", sans-serif; }
.c1 { width: 21px; } .c2 { width: 74px; } .c3 { width: 20px; } .c4 { width: 42px; } .c5 { width: 63px; } .c6 { width: 39px; } .c7 { width: 41px; } .c8 { width: 36px; }
.grid th, .grid td { background: linear-gradient(90deg, #00008b 1px, #fff 1px 2px, #780000 2px) right bottom / 3px 100% no-repeat; text-align: left; white-space: nowrap; }
.grid th { height: 14px; line-height: 11px; vertical-align: top; background-size: 3px 7px; }
.grid th.bar { background: linear-gradient(90deg, #00008b 1px, #fff 1px 2px, #780000 2px) right bottom / 3px 7px no-repeat, linear-gradient(#fff, #fff) 0 7px / 100% 2px no-repeat; }
.grid td { height: 20px; vertical-align: middle; line-height: 16px; }
.grid td:nth-child(5), .grid td:nth-child(7), .grid td:nth-child(8) { background-image: linear-gradient(90deg, #002850 1px, #e0ffe0 1px 2px, #285000 2px); }
.grid .rest td { height: auto; }
.grid td:first-child, .grid td:nth-child(3) { padding-left: 2px; }
.grid .name { padding-left: 6px; font: 700 11px "DejaVu Sans Mono", monospace; }
.grid .dim { color: #6a7683; font-weight: 400; }
.grid .mid { color: #c0c0c0; font-weight: 400; }
.dir { padding-left: 8px; }
.dir svg { width: 29px; height: 12px; }
.grid td:nth-child(5), .grid th:nth-child(5) { padding-left: 10px; }
.grid .lot { color: #1e90ff; padding-left: 7px; }
.grid th:nth-child(n+6) { padding-left: 8px; }
.grid th:nth-child(8) { padding-left: 5px; }
.grid td:nth-child(8) { padding-left: 7px; }
.grid th.ts { color: #ff4500; padding-left: 7px; font-size: 12px; line-height: 14px; }
.ts span { display: inline-block; width: 22px; }
.ts span + span { width: 8px; }
.grid .kill { width: 14px; }
.kill svg { width: 8px; height: 8px; }
.kill path { stroke: #f00; stroke-width: 2; }
.baskets { width: 234px; flex: none; padding: 7px 0 0 1px; display: flex; flex-direction: column; }
.baskets table { table-layout: fixed; width: 232px; height: 38px; border-collapse: collapse; border-top: 2px solid #fff; font: 700 12px "Open Sans", sans-serif; }
.baskets .sell { margin-top: 208px; border-top-width: 1px; }
.baskets th { text-align: left; color: #c0c0c0; height: 16px; font-size: 11px; line-height: 12px; }
.baskets th:nth-child(1) { width: 20px; }
.baskets th:nth-child(2) { width: 69px; }
.baskets th:nth-child(3) { width: 39px; }
.baskets th:nth-child(4) { width: 51px; }
.baskets td { height: 20px; padding-left: 11px; line-height: 14px; }
.baskets td:first-child, .baskets td.n { padding-left: 0; }
.baskets .buy td { color: #ff6347; }
.baskets .buy th { vertical-align: top; }
.baskets .sell td { color: #32cd32; }
.baskets .sell th { padding-left: 6px; height: 22px; }
.baskets .sell th.n { padding-left: 0; }
.raised.k12 { width: 12px; }
.report { margin: 0 14px 0 auto; align-self: flex-start; border-collapse: collapse; table-layout: fixed; width: 328px; font: 13px "Liberation Sans", Arial, sans-serif; color: #808080; white-space: nowrap; }
.report th { font-weight: 400; height: 14px; font-size: 12px; line-height: 12px; text-align: left; }
.report th:nth-child(1) { width: 142px; padding-left: 25px; }
.report th:nth-child(2) { width: 65px; }
.pts span { margin-left: -15px; }
.report th:nth-child(3) { padding-left: 36px; }
.report td { height: 12px; line-height: 12px; }
.report td:first-child { font-size: 12px; }
.report td:nth-child(4) { padding-left: 14px; }
.r { color: #b22222; }
.g { color: #008000; }
.strokes { position: absolute; left: 0; top: 0; pointer-events: none; }
.cursorline { position: absolute; left: 0; right: 0; top: 177px; height: 1px; background: #778899; }
.dialog { position: absolute; left: 423px; top: 140px; width: 458px; height: 320px; opacity: .35; color: #000; font: 10px "Open Sans", sans-serif; line-height: 12px; display: flex; flex-direction: column; white-space: nowrap; }
.shape { position: absolute; width: 100%; height: 100%; }
.dhead { position: relative; display: flex; height: 27px; padding: 0 13px 0 17px; }
.dhead span { flex: 1; line-height: 24px; }
.dhead button { width: 27px; height: 17px; border: 1px solid #889; border-top: 0; color: #fff; font-weight: 700; background: #6a7076; }
.dhead .dx { width: 43px; background: #a83a30; display: flex; align-items: center; justify-content: center; }
.dx svg { width: 10px; height: 8px; }
.dbody { position: relative; padding: 14px 20px 0 26px; display: flex; flex-direction: column; align-items: flex-start; }
.info { display: flex; gap: 22px; padding-left: 5px; height: 50px; }
.info svg { width: 40px; height: 40px; }
.info p { padding-top: 8px; }
.choose { line-height: 14px; padding-top: 2px; }
.opt { display: flex; align-items: center; height: 23px; padding-left: 14px; }
.opt label { display: flex; align-items: center; width: 138px; }
.opt input[type="radio"], .opt input[type="checkbox"] { width: 13px; height: 13px; margin-right: 3px; }
.opt .size { width: 51px; height: 18px; border: 1px solid #999; background: #f0f0f0; color: #777; padding-left: 5px; font: inherit; }
.opt span { padding: 0 6px 0 8px; }
.opt span:last-child { padding-left: 5px; }
.pub { height: 26px; }
textarea { width: 399px; height: 58px; margin-left: 12px; background: transparent; border: 1px solid #a0a0a0; resize: none; margin-top: 2px; }
.choose + .opt { margin-top: 5px; }
.acts { display: flex; gap: 10px; margin: 12px 0 0 130px; }
.acts button { width: 71px; height: 20px; border: 1px solid #707070; background: #d8d8d8; border-radius: 2px; }
.acts .ok { background: linear-gradient(#b8dcf0, #78a8c4); border-color: #2c628b; }
.scale { width: 39px; position: relative; font-size: 10px; line-height: 12px; margin-top: -3px; }
.scale span { display: flex; height: 73px; align-items: flex-start; }
.scale span::before { content: ""; width: 2px; height: 1px; margin: 6px 1px 0 0; background: #fff; }
.scale b { position: absolute; left: 0; right: 0; top: 176px; height: 11px; line-height: 11px; padding-left: 3px; background: #fff; color: #000; font-weight: 400; }
.dates { display: flex; height: 22px; font-size: 10px; line-height: 15px; }
.dates span { width: 64px; white-space: nowrap; }
.dates span::before { content: ""; display: block; width: 1px; height: 2px; margin-left: 1px; background: #fff; }
.tabs { display: flex; height: 20px; margin-top: 1px; padding-left: 34px; border-top: 1px solid #000; color: #777; align-items: center; }
.tabs a { width: 96px; text-align: center; line-height: 12px; border-right: 1px solid #808080; }
.tabs .cur { width: 81px; color: #000; background: #fff; border: 1px solid #000; border-top: 0; height: 18px; line-height: 18px; align-self: flex-start; }
.tabs a:nth-child(2) { width: 84px; }
.la { border: 4px solid transparent; border-right: 4px solid #777; border-left: 0; margin-right: 14px; }
.ra { border: 4px solid transparent; border-left: 4px solid #777; border-right: 0; margin-right: 1px; }
.status { display: flex; height: 15px; margin-top: 1px; overflow: hidden; padding: 3px 0 0 3px; line-height: 18px; white-space: nowrap; }
.status span { border-right: 1px solid #a0a0a0; padding-left: 5px; }
.status .help { flex: 1; padding-left: 0; }
.s116 { width: 116px; } .s102 { width: 102px; } .s71 { width: 71px; } .s68 { width: 68px; } .s70 { width: 70px; } .s66 { width: 66px; }
.status .net { display: flex; gap: 3px; width: 140px; border: 0; }
.net svg { width: 24px; height: 12px; }
.taskbar { display: flex; height: 15px; flex: none; border-top: 1px solid #16202c; overflow: hidden; background: linear-gradient(#a8c6e6, #5f83a6 50%, #3a556e); }
.taskbar svg { width: 36px; height: 15px; }
.orb { margin-left: 9px; }
.t1 { margin-left: 25px; } .t2 { margin-left: 27px; } .t3 { margin-left: 26px; }
.task { width: 59px; margin-left: 1px; padding-left: 11px; border: 1px solid #cfe0ee; border-bottom: 0; border-radius: 2px 2px 0 0; background: linear-gradient(#b4cadf, #7f9cb8); }
.t4 { margin-left: 14px; }
.t5 { margin-left: 3px; }
.lit { background: linear-gradient(#f4f8fc, #c4d4de); }
.t6 { margin-left: 2px; }
.lang { color: #fff; line-height: 28px; margin-right: 44px; font-size: 11px; }
.taskbar .tray { width: 66px; }
.time { color: #fff; line-height: 22px; margin: 0 25px 0 43px; }
.peek { width: 14px; border: 1px solid #9db2c6; background: #5d7488; }
</style>
